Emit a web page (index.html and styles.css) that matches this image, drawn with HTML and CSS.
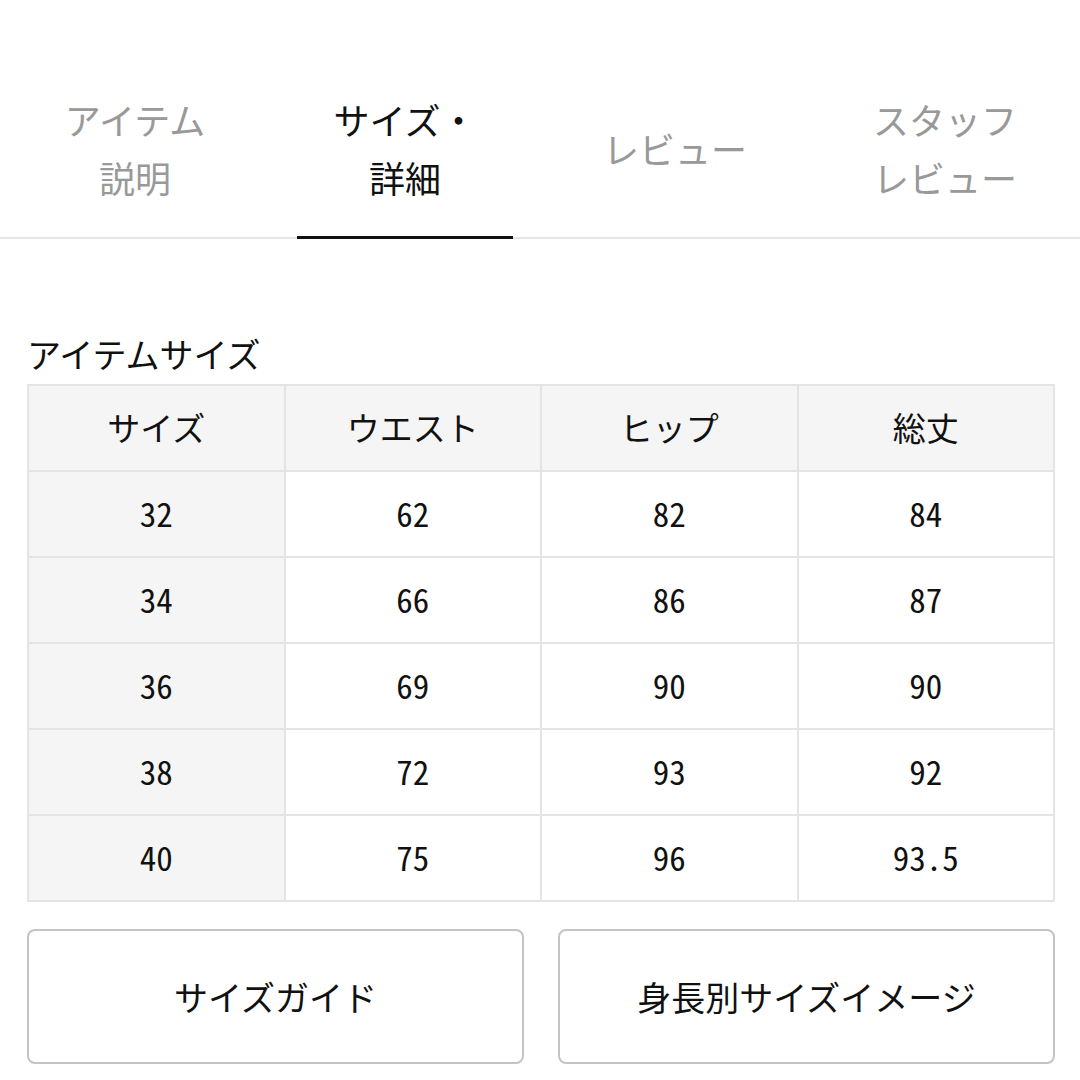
FILE: index.html
```html
<!DOCTYPE html>
<html lang="ja">
<head>
<meta charset="utf-8">
<link rel="stylesheet" href="styles.css">
</head>
<body>
<nav class="tabs">
  <div class="tab">アイテム<br>説明</div>
  <div class="tab active">サイズ・<br>詳細</div>
  <div class="tab">レビュー</div>
  <div class="tab">スタッフ<br>レビュー</div>
</nav>
<main class="content">
  <h2 class="title">アイテムサイズ</h2>
  <table class="size-table">
    <thead>
      <tr><th>サイズ</th><th>ウエスト</th><th>ヒップ</th><th>総丈</th></tr>
    </thead>
    <tbody>
      <tr><td class="num first">32</td><td class="num">62</td><td class="num">82</td><td class="num">84</td></tr>
      <tr><td class="num first">34</td><td class="num">66</td><td class="num">86</td><td class="num">87</td></tr>
      <tr><td class="num first">36</td><td class="num">69</td><td class="num">90</td><td class="num">90</td></tr>
      <tr><td class="num first">38</td><td class="num">72</td><td class="num">93</td><td class="num">92</td></tr>
      <tr><td class="num first">40</td><td class="num">75</td><td class="num">96</td><td class="num">93.5</td></tr>
    </tbody>
  </table>
  <div class="buttons">
    <button class="btn">サイズガイド</button>
    <button class="btn">身長別サイズイメージ</button>
  </div>
</main>
</body>
</html>
```
FILE: styles.css
```css
html, body {
  margin: 0;
  padding: 0;
  background: #fff;
}
body {
  font-family: "Noto Sans CJK JP", "Noto Sans", sans-serif;
  color: #111;
  width: 1080px;
}
.tabs {
  display: flex;
  height: 239px;
  border-bottom: 2px solid #e6e6e6;
  box-sizing: border-box;
  padding-top: 58px;
}
.tab {
  flex: 1;
  display: flex;
  align-items: center;
  justify-content: center;
  text-align: center;
  font-size: 36px;
  line-height: 58px;
  color: #999;
  position: relative;
}
.tab.active {
  color: #111;
}
.tab.active::after {
  content: "";
  position: absolute;
  left: 10%;
  right: 10%;
  bottom: -2px;
  height: 3px;
  background: #111;
}
.content {
  padding: 89px 25px 0 27px;
}
.title {
  margin: 0 0 4px;
  font-size: 34px;
  font-weight: 400;
  line-height: 52px;
}
.size-table {
  width: 100%;
  border-collapse: collapse;
  table-layout: fixed;
}
.size-table th, .size-table td {
  border: 2px solid #e4e4e4;
  height: 81px;
  padding: 0 0 3px;
  text-align: center;
  vertical-align: middle;
  font-size: 33px;
  font-weight: 400;
}
.size-table th {
  background: #f5f5f5;
}
.size-table td.first {
  background: #f5f5f5;
}
.num {
  font-family: "Noto Sans Mono CJK JP", "Noto Sans CJK JP", monospace;
  font-size: 34px;
}
.buttons {
  display: flex;
  gap: 34px;
  margin-top: 27px;
}
.btn {
  flex: 1;
  height: 135px;
  background: #fff;
  border: 2px solid #c4c4c4;
  border-radius: 8px;
  font-family: "Noto Sans CJK JP", sans-serif;
  font-size: 34px;
  color: #111;
  padding: 0;
}
```
